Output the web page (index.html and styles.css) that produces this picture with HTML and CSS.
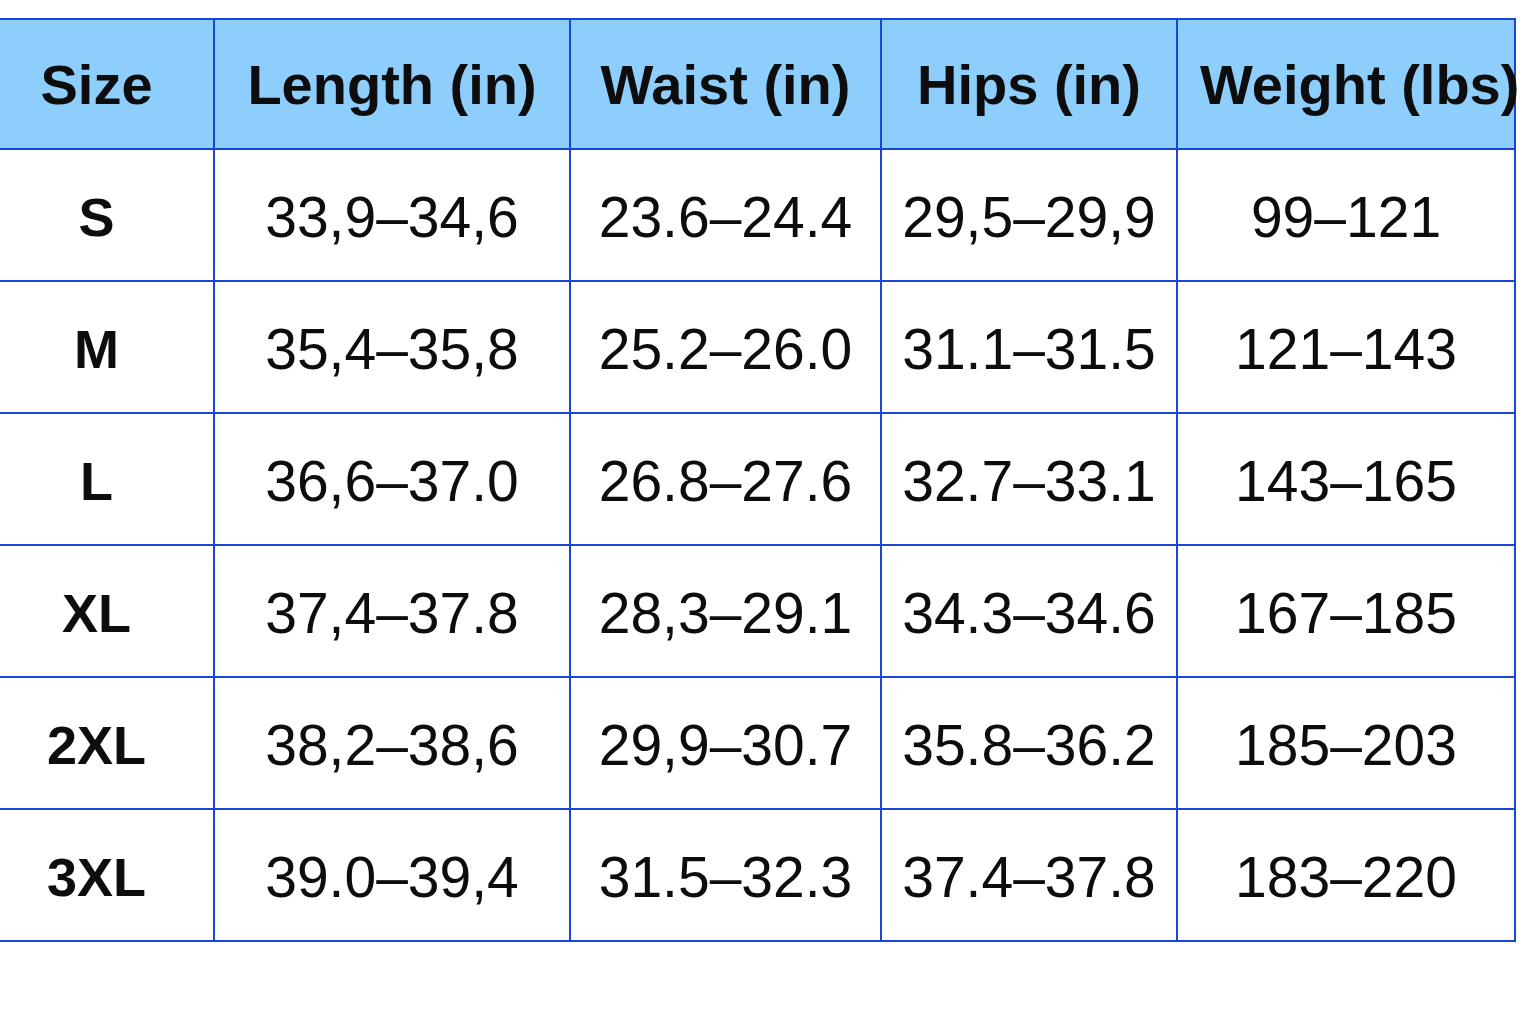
FILE: index.html
```html
<!DOCTYPE html>
<html>
<head>
<meta charset="utf-8">
<link rel="stylesheet" href="styles.css">
</head>
<body>
<div class="table">
  <div class="cell head c1">Size</div>
  <div class="cell head">Length (in)</div>
  <div class="cell head">Waist (in)</div>
  <div class="cell head">Hips (in)</div>
  <div class="cell head last">Weight (lbs)</div>

  <div class="cell size c1">S</div>
  <div class="cell">33,9–34,6</div>
  <div class="cell">23.6–24.4</div>
  <div class="cell">29,5–29,9</div>
  <div class="cell">99–121</div>

  <div class="cell size c1">M</div>
  <div class="cell">35,4–35,8</div>
  <div class="cell">25.2–26.0</div>
  <div class="cell">31.1–31.5</div>
  <div class="cell">121–143</div>

  <div class="cell size c1">L</div>
  <div class="cell">36,6–37.0</div>
  <div class="cell">26.8–27.6</div>
  <div class="cell">32.7–33.1</div>
  <div class="cell">143–165</div>

  <div class="cell size c1">XL</div>
  <div class="cell">37,4–37.8</div>
  <div class="cell">28,3–29.1</div>
  <div class="cell">34.3–34.6</div>
  <div class="cell">167–185</div>

  <div class="cell size c1">2XL</div>
  <div class="cell">38,2–38,6</div>
  <div class="cell">29,9–30.7</div>
  <div class="cell">35.8–36.2</div>
  <div class="cell">185–203</div>

  <div class="cell size c1">3XL</div>
  <div class="cell">39.0–39,4</div>
  <div class="cell">31.5–32.3</div>
  <div class="cell">37.4–37.8</div>
  <div class="cell">183–220</div>
</div>
</body>
</html>
```

FILE: styles.css
```css
html, body {
  margin: 0;
  padding: 0;
  background: #ffffff;
}

body {
  padding-top: 18px;
  font-family: "Liberation Sans", Arial, sans-serif;
  color: #0d0d0d;
}

.table {
  display: grid;
  grid-template-columns: 215px 356px 311px 296px 338px;
  grid-auto-rows: 132px;
  width: 1516px;
}

.cell {
  box-sizing: border-box;
  border-right: 2px solid #1a46d6;
  border-bottom: 2px solid #1a46d6;
  display: flex;
  align-items: center;
  justify-content: center;
  font-size: 57px;
  font-weight: 400;
  white-space: nowrap;
  padding-top: 4px;
}

.head {
  background: #8dcefd;
  font-weight: 700;
  font-size: 56px;
  padding-top: 0;
  border-top: 2px solid #1a46d6;
}

.size {
  font-weight: 700;
  font-size: 54px;
}

.c1 {
  padding-right: 20px;
}

.last {
  justify-content: flex-start;
  padding-left: 22px;
}
```
